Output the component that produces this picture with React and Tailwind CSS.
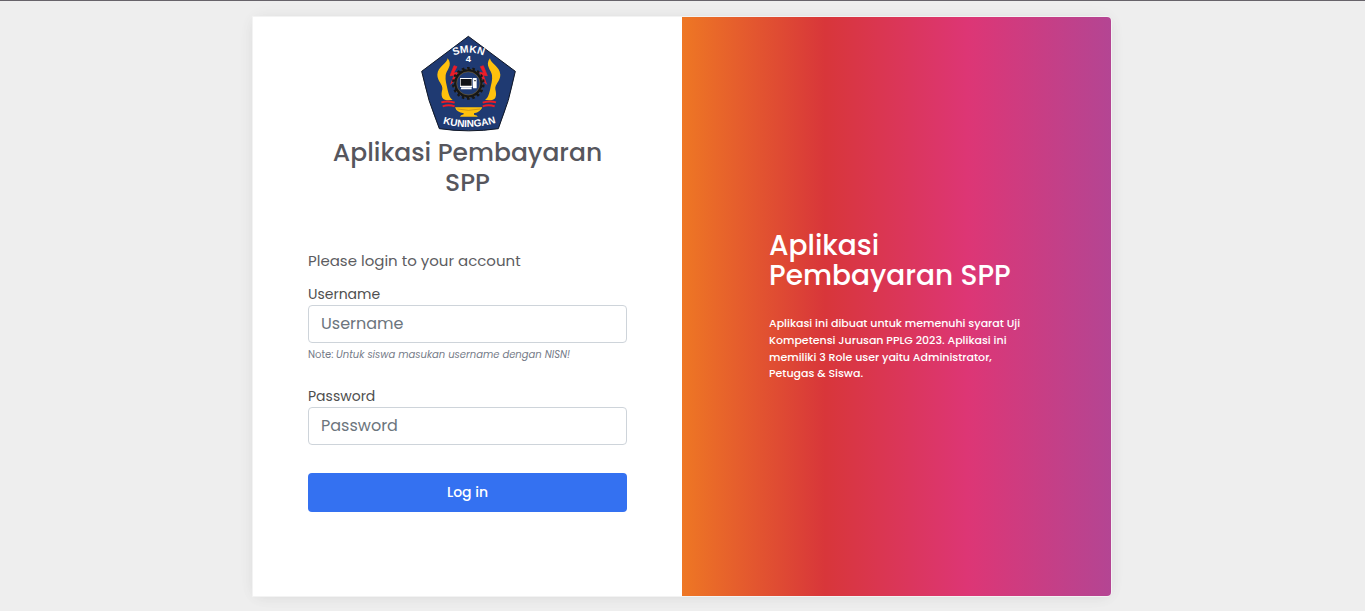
function SchoolCrest() {
  const teeth = Array.from({ length: 18 }, (_, i) => i * 20);
  return (
    <svg className="block h-[104px] w-[106px]" viewBox="0 0 318 312" role="img" aria-label="SMKN 4 Kuningan">
      <path d="M160 13 L301 118 Q284 207 250 290 Q161 303 73 290 Q38 207 20 118 Z" fill="#1f3a72" stroke="#111827" strokeWidth="3" strokeLinejoin="round" />
      <path id="crest-top" d="M92 84 Q161 40 230 84" fill="none" />
      <path id="crest-bottom" d="M72 271 Q161 300 254 269" fill="none" />
      <text fill="#fff" fontFamily="Liberation Sans, sans-serif" fontWeight="700" fontSize="31">
        <textPath href="#crest-top" startOffset="50%" textAnchor="middle">SMKN</textPath>
      </text>
      <text x="160" y="90" textAnchor="middle" fill="#fff" fontFamily="Liberation Sans, sans-serif" fontWeight="700" fontSize="28">4</text>
      <text fill="#fff" fontFamily="Liberation Sans, sans-serif" fontWeight="700" fontSize="30">
        <textPath href="#crest-bottom" startOffset="50%" textAnchor="middle">KUNINGAN</textPath>
      </text>
      <path id="crest-flame" d="M98 79 C97 94 68 104 67 128 C67 148 84 156 82 172 C80 182 78 188 82 197 C87 207 104 204 113 204 C103 197 102 188 98 174 C95 158 90 146 92 130 C93 116 115 100 98 79 Z" fill="#fec10d" />
      <use href="#crest-flame" transform="matrix(-1 0 0 1 323 0)" />
      <path id="crest-bolt" d="M117 101 L105 131 L117 130 L107 157 L116 148 L128 121 L116 123 L126 104 Z" fill="#ee1c27" stroke="#ee1c27" strokeWidth="2" />
      <use href="#crest-bolt" transform="matrix(-1 0 0 1 322 0)" />
      <path id="crest-ribbon" d="M79 211 Q98 205 119 212 M83 223 Q101 216 119 223" fill="none" stroke="#ee1c27" strokeWidth="6" />
      <use href="#crest-ribbon" transform="matrix(-1 0 0 1 322 0)" />
      <g stroke="#171717" strokeWidth="8">
        {teeth.map((angle) => (
          <path key={angle} d="M160 105 V114" transform={`rotate(${angle} 160 154)`} />
        ))}
      </g>
      <circle cx="160" cy="154" r="39" fill="#1f3a72" stroke="#171717" strokeWidth="8" />
      <circle cx="160" cy="154" r="43" fill="none" stroke="#806a35" strokeWidth="1.5" strokeDasharray="5 10" />
      <circle cx="160" cy="154" r="35" fill="none" stroke="#92732f" strokeWidth="1.5" />
      <path d="M135 138 H172 V165 H135 Z M174 138 H185 V169 H174 Z M139 166 H170 V172 H137 Z" fill="#fff" />
      <path d="M137 141 H170 V161 H137 Z M178 144 h4 v4 h-4 Z" fill="#101217" />
      <path d="M120 226 H202 Q197 240 177 244 V248 Q188 250 188 254 H135 Q136 249 146 247 V244 Q125 241 120 226 Z" fill="#fec10d" />
      <path d="M127 231 Q160 239 196 231" fill="none" stroke="#b58319" strokeWidth="2" />
    </svg>
  );
}

function Field({ label, type, id, children }) {
  return (
    <div>
      <label htmlFor={id} className="block h-[22px] text-[14px] leading-[22px] text-[#4f4f4f]">
        {label}
      </label>
      <input
        id={id}
        type={type}
        placeholder={label}
        className="block h-[38px] w-full rounded-[4px] border border-[#ced4da] bg-white px-3 pb-[2px] text-[16px] text-[#4f4f4f] outline-none placeholder:text-[#6c757d]"
      />
      {children}
    </div>
  );
}

export default function App() {
  return (
    <main className="flex h-[611px] justify-center border-t border-[#67636a] bg-[#eeeeee] pt-[15px] font-['Poppins','Inter',sans-serif]">
      <div className="-ml-px flex h-[581px] w-[860px] overflow-hidden rounded-r-[5px] border border-[#f3f3f3] bg-white shadow-[0_2px_15px_-3px_rgba(0,0,0,0.07),0_0px_20px_-2px_rgba(0,0,0,0.04)]">
        <section className="w-[429px] shrink-0 px-[55px] pt-[15px]">
          <div className="flex justify-center">
            <SchoolCrest />
          </div>
          <h1 className="mt-[2px] flex flex-col items-center text-[25px] leading-[30px] font-medium whitespace-nowrap text-[#56565d]">
            <span>Aplikasi Pembayaran</span>
            <span>SPP</span>
          </h1>
          <form className="mt-[51px]" onSubmit={(event) => event.preventDefault()}>
            <p className="h-[34px] text-[15px] leading-[24px] text-[#5c5c61]">Please login to your account</p>
            <Field label="Username" type="text" id="username">
              <p className="h-[42px] pt-[4px] text-[10px] leading-[16px] whitespace-nowrap text-[#757b88]">
                Note: <em>Untuk siswa masukan username dengan NISN!</em>
              </p>
            </Field>
            <Field label="Password" type="password" id="password" />
            <button className="mt-[28px] h-[39px] w-full rounded-[4px] bg-[#3471f1] pb-px text-[14px] font-medium text-white">Log in</button>
          </form>
        </section>
        <section className="flex w-[429px] shrink-0 flex-col bg-[linear-gradient(to_right,#ee7724,#d8363a,#dd3675,#b44593)] pt-[214px] pl-[87px] whitespace-nowrap text-white">
          <h2 className="flex flex-col text-[28px] leading-[30px] font-medium">
            <span>Aplikasi</span>
            <span>Pembayaran SPP</span>
          </h2>
          <p className="mt-[24px] flex flex-col text-[11px] leading-[16.8px] font-medium">
            <span>Aplikasi ini dibuat untuk memenuhi syarat Uji</span>
            <span>Kompetensi Jurusan PPLG 2023. Aplikasi ini</span>
            <span>memiliki 3 Role user yaitu Administrator,</span>
            <span>Petugas &amp; Siswa.</span>
          </p>
        </section>
      </div>
    </main>
  );
}
